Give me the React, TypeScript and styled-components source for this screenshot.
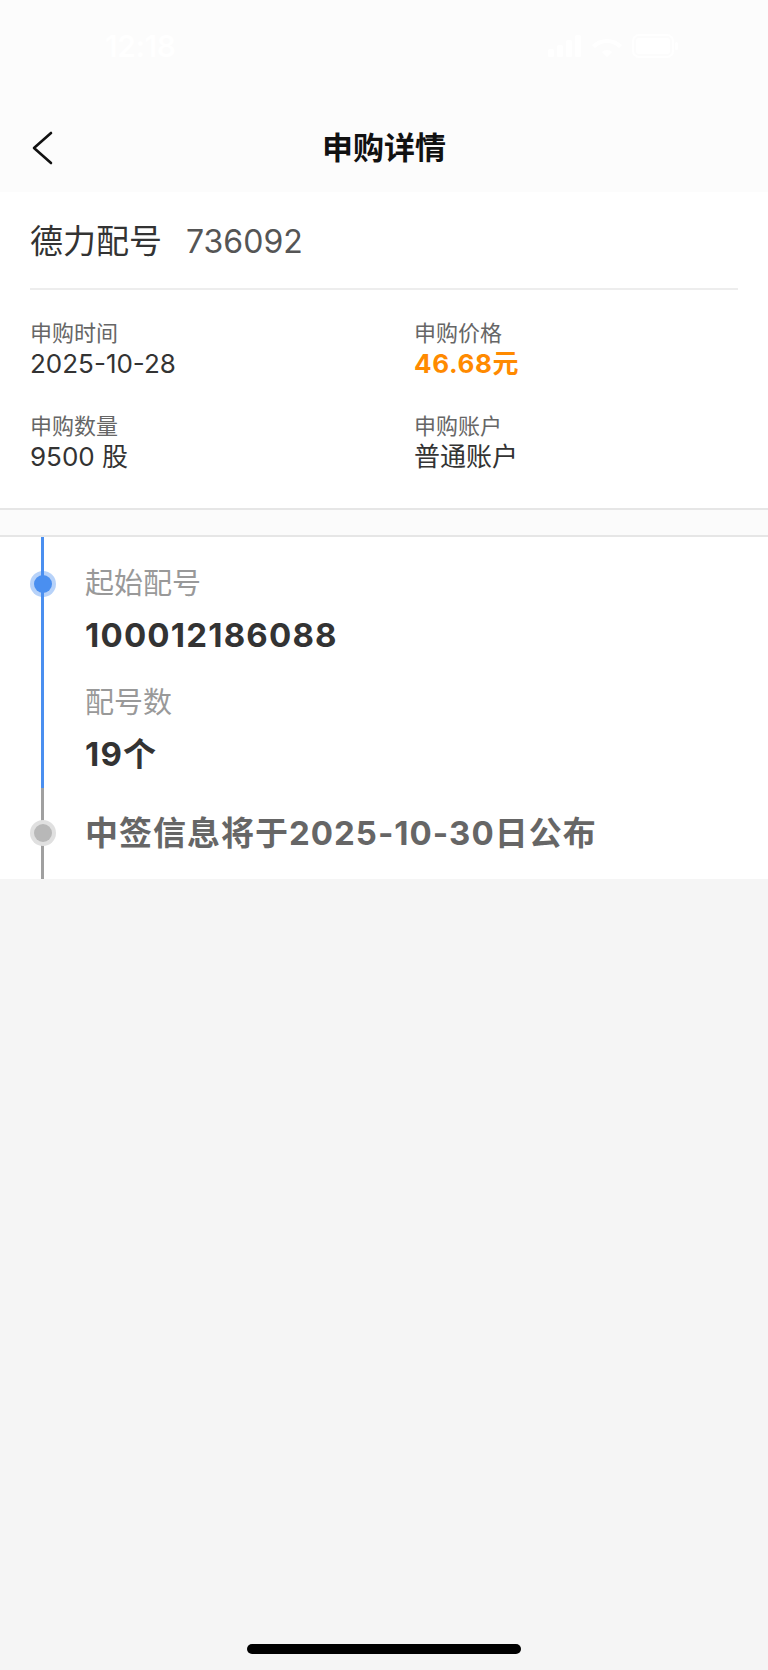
import React from "react";
import styled, { createGlobalStyle } from "styled-components";

const Global = createGlobalStyle`
  html, body { margin: 0; padding: 0; background: #f5f5f5; }
  body { font-family: "Inter", "Noto Sans CJK SC", sans-serif; -webkit-font-smoothing: antialiased; }
  * { box-sizing: border-box; }
`;

const Page = styled.div`
  min-height: 1670px;
  display: flex;
  flex-direction: column;
  background: #f5f5f5;
`;

const Header = styled.header`
  background: #fcfcfc;
  display: flex;
  flex-direction: column;
`;

const StatusBar = styled.div`
  height: 104px;
  display: flex;
  align-items: center;
  justify-content: space-between;
  padding: 0 88px 12px 105px;
  color: #ffffff;
`;

const Time = styled.span`
  font-size: 30px;
  font-weight: 600;
  letter-spacing: -0.5px;
`;

const StatusIcons = styled.div`
  display: flex;
  align-items: center;
  gap: 10px;
`;

const NavBar = styled.nav`
  height: 88px;
  display: grid;
  grid-template-columns: 1fr auto 1fr;
  align-items: center;
  padding: 0 31px;
`;

const BackButton = styled.button`
  border: 0;
  background: none;
  padding: 0;
  width: 24px;
  height: 34px;
  display: flex;
  align-items: center;
  cursor: pointer;
  justify-self: start;
`;

const Title = styled.h1`
  margin: 0;
  font-size: 31px;
  font-weight: 700;
  color: #111;
  line-height: 40px;
`;

const InfoSection = styled.section`
  background: #fff;
  padding: 30px 30px 35px 30px;
  border-bottom: 2px solid #e6e6e6;
`;

const NameRow = styled.div`
  display: flex;
  align-items: baseline;
  gap: 24px;
  line-height: 38px;
  padding-bottom: 27px;
  border-bottom: 2px solid #ededed;
`;

const StockName = styled.span`
  font-size: 33px;
  color: #333;
`;

const StockCode = styled.span`
  font-size: 32px;
  color: #555;
`;

const InfoGrid = styled.div`
  display: grid;
  grid-template-columns: 384px 1fr;
  row-gap: 31px;
  padding-top: 28px;
`;

const Field = styled.div`
  display: flex;
  flex-direction: column;
`;

const FieldLabel = styled.span`
  font-size: 22px;
  line-height: 30px;
  color: #666;
`;

const FieldValue = styled.span<{ $accent?: boolean }>`
  font-size: 26px;
  line-height: 32px;
  color: ${(p) => (p.$accent ? "#ff8a00" : "#333")};
  font-weight: ${(p) => (p.$accent ? 700 : 400)};
  letter-spacing: ${(p) => (p.$accent ? "0.6px" : "0")};
`;

const Spacer = styled.div`
  height: 27px;
  background: #fbfbfb;
  border-bottom: 2px solid #e6e6e6;
`;

const Timeline = styled.section`
  background: #fff;
  display: flex;
  flex-direction: column;
`;

const Step = styled.div`
  display: flex;
`;

const Rail = styled.div<{ $color: string; $dotTop: number }>`
  width: 85px;
  flex: none;
  display: flex;
  justify-content: center;
  align-items: flex-start;
  padding-top: ${(p) => p.$dotTop}px;
  background-image: linear-gradient(
    to right,
    transparent 41px,
    ${(p) => p.$color} 41px,
    ${(p) => p.$color} 44px,
    transparent 44px
  );
`;

const Dot = styled.span<{ $core: string; $halo: string }>`
  width: 26px;
  height: 26px;
  border-radius: 50%;
  background: ${(p) => p.$halo};
  display: flex;
  align-items: center;
  justify-content: center;
  &::after {
    content: "";
    width: 18px;
    height: 18px;
    border-radius: 50%;
    background: ${(p) => p.$core};
  }
`;

const StepBody = styled.div<{ $pt: number; $pb: number }>`
  display: flex;
  flex-direction: column;
  padding: ${(p) => p.$pt}px 0 ${(p) => p.$pb}px 0;
`;

const StepLabel = styled.span<{ $gap?: number }>`
  font-size: 29px;
  line-height: 40px;
  color: #999;
  margin-top: ${(p) => p.$gap ?? 0}px;
`;

const StepValue = styled.span`
  font-size: 33px;
  line-height: 44px;
  font-weight: 700;
  color: #333;
  letter-spacing: 1.2px;
  margin-top: 9px;
`;

const StepNotice = styled.span`
  font-size: 33px;
  line-height: 44px;
  font-weight: 700;
  color: #666;
  letter-spacing: 1px;
`;

const Fill = styled.div`
  flex: 1;
  display: flex;
  flex-direction: column;
  justify-content: flex-end;
  align-items: center;
  padding-bottom: 16px;
`;

const HomeIndicator = styled.div`
  width: 274px;
  height: 10px;
  border-radius: 5px;
  background: #000;
`;

export default function App() {
  return (
    <Page>
      <Global />
      <Header>
        <StatusBar>
          <Time>12:18</Time>
          <StatusIcons>
            <svg width="34" height="22" viewBox="0 0 34 22" fill="#fff">
              <rect x="0" y="14" width="6" height="8" rx="1.5" />
              <rect x="9" y="10" width="6" height="12" rx="1.5" />
              <rect x="18" y="5" width="6" height="17" rx="1.5" />
              <rect x="27" y="0" width="6" height="22" rx="1.5" />
            </svg>
            <svg width="30" height="22" viewBox="0 0 30 22" fill="#fff">
              <path d="M15 22l-5-5a7 7 0 0 1 10 0z M15 4C9 4 4 6 0 10l3 3c3-3 7-5 12-5s9 2 12 5l3-3C26 6 21 4 15 4z" />
            </svg>
            <svg width="48" height="24" viewBox="0 0 48 24" fill="none" stroke="#fff">
              <rect x="1" y="1" width="40" height="22" rx="6" strokeWidth="2" />
              <rect x="4" y="4" width="34" height="16" rx="3" fill="#fff" stroke="none" />
              <rect x="43" y="8" width="3" height="8" rx="1.5" fill="#fff" stroke="none" />
            </svg>
          </StatusIcons>
        </StatusBar>
        <NavBar>
          <BackButton aria-label="返回">
            <svg width="22" height="34" viewBox="0 0 22 34" fill="none">
              <polyline
                points="20,2 3,17 20,32"
                stroke="#111"
                strokeWidth="2.6"
                strokeLinecap="round"
                strokeLinejoin="round"
              />
            </svg>
          </BackButton>
          <Title>申购详情</Title>
          <span />
        </NavBar>
      </Header>

      <InfoSection>
        <NameRow>
          <StockName>德力配号</StockName>
          <StockCode>736092</StockCode>
        </NameRow>
        <InfoGrid>
          <Field>
            <FieldLabel>申购时间</FieldLabel>
            <FieldValue>2025-10-28</FieldValue>
          </Field>
          <Field>
            <FieldLabel>申购价格</FieldLabel>
            <FieldValue $accent>46.68元</FieldValue>
          </Field>
          <Field>
            <FieldLabel>申购数量</FieldLabel>
            <FieldValue>9500 股</FieldValue>
          </Field>
          <Field>
            <FieldLabel>申购账户</FieldLabel>
            <FieldValue>普通账户</FieldValue>
          </Field>
        </InfoGrid>
      </InfoSection>

      <Spacer />

      <Timeline>
        <Step>
          <Rail $color="#4a8ff0" $dotTop={34}>
            <Dot $core="#4a8ff0" $halo="rgba(74,143,240,0.4)" />
          </Rail>
          <StepBody $pt={27} $pb={12}>
            <StepLabel>起始配号</StepLabel>
            <StepValue>100012186088</StepValue>
            <StepLabel $gap={26}>配号数</StepLabel>
            <StepValue>19个</StepValue>
          </StepBody>
        </Step>
        <Step>
          <Rail $color="#a0a0a0" $dotTop={32}>
            <Dot $core="#b8b8b8" $halo="#e0e0e0" />
          </Rail>
          <StepBody $pt={23} $pb={24}>
            <StepNotice>中签信息将于2025-10-30日公布</StepNotice>
          </StepBody>
        </Step>
      </Timeline>

      <Fill>
        <HomeIndicator />
      </Fill>
    </Page>
  );
}
